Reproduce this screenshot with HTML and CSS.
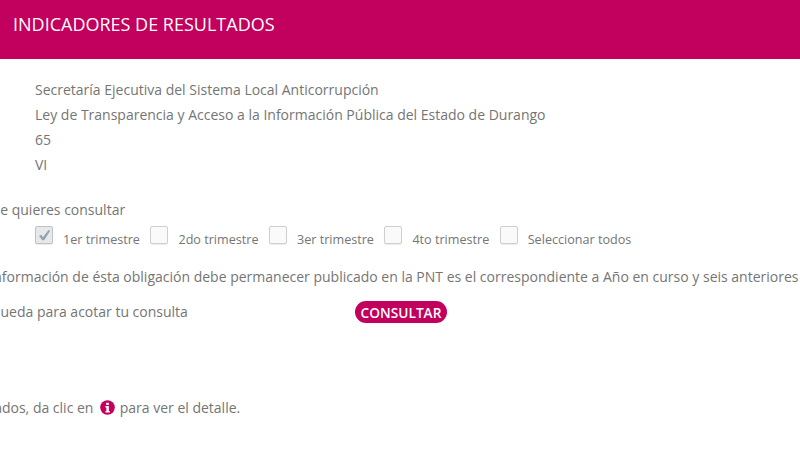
FILE: index.html
```html
<!DOCTYPE html>
<html lang="es">
  <head>
    <meta charset="UTF-8" />
    <title>Indicadores de resultados</title>
    <link rel="stylesheet" href="styles.css">
  </head>
  <body>
    <div class="header">
      <h1>INDICADORES DE RESULTADOS</h1>
    </div>
    <div class="content">
      <div class="details">
        <p>Secretaría Ejecutiva del Sistema Local Anticorrupción</p>
        <p>Ley de Transparencia y Acceso a la Información Pública del Estado de Durango</p>
        <p>65</p>
        <p>VI</p>
      </div>

      <p class="line periodo">Selecciona el periodo que quieres consultar</p>
      <div class="checks">
        <label class="check"><span class="box checked"><svg viewBox="0 0 18 18" width="18" height="18"><path d="M4 10l2.4-1.3 1.5 2.6L13.6 4l1.6.7-6 9.5H7.3z" fill="#98a2aa"/></svg></span>1er trimestre</label>
        <label class="check"><span class="box"></span>2do trimestre</label>
        <label class="check"><span class="box"></span>3er trimestre</label>
        <label class="check"><span class="box"></span>4to trimestre</label>
        <label class="check"><span class="box"></span>Seleccionar todos</label>
      </div>

      <p class="line aviso">El periodo de información de ésta obligación debe permanecer publicado en la PNT es el correspondiente a Año en curso y seis anteriores</p>

      <div class="search-row">
        <p class="line busqueda">Utiliza filtros de búsqueda para acotar tu consulta</p>
        <button class="consultar">CONSULTAR</button>
      </div>

      <p class="line resultados">Para ver los resultados, da clic en
        <svg class="info" viewBox="0 0 16 16" width="15" height="15"><circle cx="8" cy="8" r="7.8" fill="#c2005d"/><path d="M6.6 2.8h2.8v2.4H6.6zM5.8 6.4h3.6v5.2h1v1.6H5.8v-1.6h1V8H5.8z" fill="#fff"/></svg>
        para ver el detalle.</p>
    </div>
  </body>
</html>
```

FILE: styles.css
```css
html,
body {
  margin: 0;
  padding: 0;
  background-color: #fff;
  overflow: hidden;
}

body {
  font-family: "Open Sans", sans-serif;
  font-size: 14px;
  color: #757575;
}

p {
  margin: 0;
}

.header {
  background-color: #c2005d;
  height: 59px;
  padding: 0 13px;
}

.header h1 {
  margin: 0;
  padding-top: 12px;
  font-size: 18px;
  line-height: 24px;
  font-weight: 400;
  color: #fff;
}

.content {
  padding-top: 18px;
  white-space: nowrap;
}

.details {
  padding-left: 35px;
  line-height: 25px;
}

.line {
  line-height: 20px;
}

.periodo {
  margin-top: 23px;
  margin-left: -159px;
}

.checks {
  display: flex;
  padding-left: 35px;
  margin-top: 6px;
  height: 22px;
  font-size: 12.6px;
}

.check {
  display: flex;
  align-items: flex-end;
  margin-right: 10.5px;
}

.box {
  box-sizing: border-box;
  width: 18px;
  height: 18px;
  margin-right: 10px;
  align-self: flex-start;
  border: 1px solid #cfcfcf;
  border-radius: 2px;
  background-color: #fafafa;
  box-shadow: 0 1px 1px rgba(0, 0, 0, 0.08);
}

.box svg {
  display: block;
  margin: -1px;
}

.box.checked {
  background-color: #e6e8ea;
  border-color: #bcc3c8;
}

.aviso {
  margin-top: 19px;
  margin-left: -100px;
}

.search-row {
  display: flex;
  align-items: center;
  margin-top: 14px;
  height: 22px;
}

.busqueda {
  width: 0;
  margin-left: -137px;
}

.consultar {
  margin-left: 492px;
  width: 92px;
  height: 22px;
  padding: 0;
  border: 0;
  border-radius: 11px;
  background-color: #c2005d;
  color: #fff;
  font-family: inherit;
  font-size: 13.7px;
  font-weight: 600;
}

.resultados {
  margin-top: 75px;
  margin-left: -123px;
}

.info {
  vertical-align: -2px;
  margin: 0 1px 0 3px;
}
```
